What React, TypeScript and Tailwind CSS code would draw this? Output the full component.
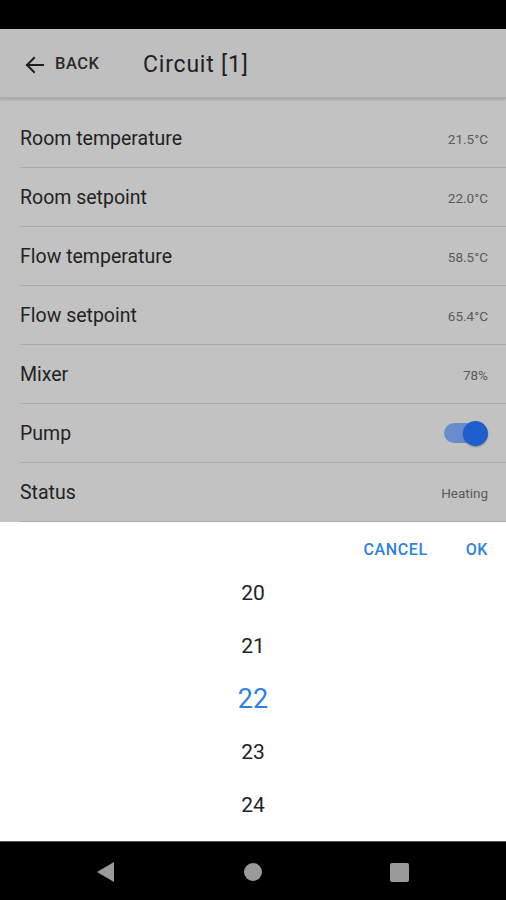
import React from "react";

const rows: { label: string; value?: string; toggle?: boolean }[] = [
  { label: "Room temperature", value: "21.5°C" },
  { label: "Room setpoint", value: "22.0°C" },
  { label: "Flow temperature", value: "58.5°C" },
  { label: "Flow setpoint", value: "65.4°C" },
  { label: "Mixer", value: "78%" },
  { label: "Pump", toggle: true },
  { label: "Status", value: "Heating" },
];

export default function App() {
  return (
    <div className="w-[506px] h-[900px] flex flex-col bg-[#c2c2c2] overflow-hidden" style={{ fontFamily: "Roboto, 'Noto Sans', sans-serif" }}>
      <div className="h-[29px] bg-black shrink-0" />
      <div className="h-[70px] shrink-0 bg-[#bfbfbf] flex items-center border-b-2 border-[#ababab] shadow-[0_1px_2px_rgba(0,0,0,0.15)]">
        <div className="flex items-center pl-[23px] w-[143px] pt-[3px]">
          <svg width="24" height="24" viewBox="0 0 24 24" className="text-[#1f1f1f]">
            <path d="M20 12H4M11 5l-7 7 7 7" fill="none" stroke="currentColor" strokeWidth="2" strokeLinecap="square" />
          </svg>
          <span className="ml-[8px] text-[16.5px] font-medium tracking-[0.5px] text-[#2a2a2a]">BACK</span>
        </div>
        <span className="text-[23px] text-[#1f1f1f] tracking-[0.8px] pt-[4px]">Circuit [1]</span>
      </div>
      <div className="flex flex-col pt-[10px] shrink-0">
        {rows.map((r) => (
          <div key={r.label} className="ml-[20px] h-[59px] flex items-center justify-between pr-[18px] border-b border-[#acacac]">
            <span className="text-[19.5px] text-[#222] pt-[2px]">{r.label}</span>
            {r.toggle ? (
              <div className="relative w-[46px] h-[26px] flex items-center">
                <div className="absolute left-[2px] right-[4px] h-[20px] rounded-full bg-[#6b8ccc]" />
                <div className="absolute right-0 w-[25px] h-[25px] rounded-full bg-[#1d5fcc] shadow-[0_1px_2px_rgba(0,0,0,0.3)]" />
              </div>
            ) : (
              <span className="text-[13.5px] text-[#5a5a5a] pt-[2px]">{r.value}</span>
            )}
          </div>
        ))}
      </div>
      <div className="flex-1 bg-white flex flex-col">
        <div className="h-[44px] pt-[12px] flex items-center justify-end pr-[18px] gap-[38px]">
          <span className="text-[16px] font-medium text-[#2f7fe6] tracking-[0.6px]">CANCEL</span>
          <span className="text-[16px] font-medium text-[#2f7fe6] tracking-[0.6px]">OK</span>
        </div>
        <div className="flex flex-col items-center mt-[1px]">
          {[20, 21, 22, 23, 24].map((n) => (
            <div key={n} className="h-[53px] flex items-center justify-center">
              <span className={n === 22 ? "text-[27px] text-[#2f7fe6]" : "text-[21px] text-[#222]"}>{n}</span>
            </div>
          ))}
        </div>
      </div>
      <div className="h-[59px] bg-black shrink-0 flex items-center relative border-t border-[#555]">
        <svg className="absolute left-[96px] top-[19px]" width="20" height="22" viewBox="0 0 20 22">
          <path d="M18 1 L1 11 L18 21 Z" fill="#9a9a9a" />
        </svg>
        <div className="absolute left-[244px] top-[21px] w-[18px] h-[18px] rounded-full bg-[#9a9a9a]" />
        <div className="absolute left-[390px] top-[21px] w-[19px] h-[19px] rounded-[2px] bg-[#9a9a9a]" />
      </div>
    </div>
  );
}
